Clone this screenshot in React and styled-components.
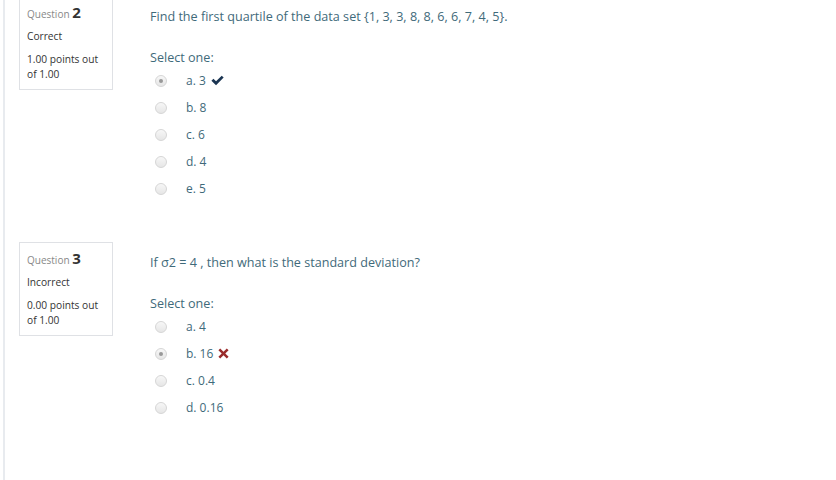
import styled, { createGlobalStyle } from 'styled-components';

const Global = createGlobalStyle`
  html, body {
    margin: 0;
    padding: 0;
    background: #fff;
    font-family: "Open Sans", "Liberation Sans", sans-serif;
  }
`;

const Page = styled.div`
  min-height: 480px;
  margin-left: 3px;
  border-left: 2px solid #e8ebef;
  padding-left: 14px;
  overflow: hidden;
`;

const Question = styled.div`
  display: flex;
  align-items: flex-start;
  margin-top: ${p => p.$first ? '-4px' : '0'};
  margin-bottom: 40px;
`;

const Info = styled.div`
  box-sizing: border-box;
  width: 94px;
  height: 94px;
  flex-shrink: 0;
  border: 1px solid #dfe1e5;
  padding: 6px 6px 0 7px;
  color: #333;
`;

const QNo = styled.div`
  font-size: 10px;
  color: #888;
  line-height: 18px;

  b {
    font-size: 15px;
    font-weight: 700;
    color: #333;
  }
`;

const State = styled.div`
  font-size: 10.2px;
  line-height: 15px;
  margin-top: 6px;
`;

const Grade = styled.div`
  font-size: 10.2px;
  line-height: 15px;
  margin-top: 8px;
  width: 76px;
`;

const Content = styled.div`
  margin-left: 37px;
  padding-top: 12px;
  color: #3f6a7a;
`;

const QText = styled.div`
  font-size: 12.6px;
  line-height: 18px;
`;

const Prompt = styled.div`
  font-size: 12.6px;
  line-height: 18px;
  margin-top: 23px;
`;

const Options = styled.div`
  display: flex;
  flex-direction: column;
`;

const Option = styled.label`
  display: flex;
  align-items: center;
  height: 27px;
  font-size: 12px;
`;

const Radio = styled.span`
  box-sizing: border-box;
  width: 12px;
  height: 12px;
  border-radius: 50%;
  margin-left: 5px;
  margin-right: 19px;
  border: 1px solid #d6d6d6;
  background: linear-gradient(#f7f7f7, #e6e6e6);
  display: flex;
  align-items: center;
  justify-content: center;

  &::after {
    content: '';
    display: ${p => p.$checked ? 'block' : 'none'};
    width: 4px;
    height: 4px;
    border-radius: 50%;
    background: #999;
  }
`;

const Mark = styled.svg`
  margin-left: 5px;
  width: ${p => p.$w}px;
  height: ${p => p.$w}px;
`;

const Check = () => (
  <Mark $w={13} viewBox="0 0 16 16">
    <path d="M0.5 8.3 L3 5.9 L6.2 9 L13.2 2 L15.6 4.4 L6.2 13.8 Z" fill="#1b3552" />
  </Mark>
);

const Cross = () => (
  <Mark $w={11} viewBox="0 0 16 16">
    <path d="M3.2 0.6 L8 5.4 L12.8 0.6 L15.4 3.2 L10.6 8 L15.4 12.8 L12.8 15.4 L8 10.6 L3.2 15.4 L0.6 12.8 L5.4 8 L0.6 3.2 Z" fill="#9a2c2c" />
  </Mark>
);

const questions = [
  {
    no: 2,
    state: 'Correct',
    grade: '1.00 points out of 1.00',
    text: 'Find the first quartile of the data set {1, 3, 3, 8, 8, 6, 6, 7, 4, 5}.',
    options: ['a. 3', 'b. 8', 'c. 6', 'd. 4', 'e. 5'],
    chosen: 0,
    right: true,
  },
  {
    no: 3,
    state: 'Incorrect',
    grade: '0.00 points out of 1.00',
    text: 'If σ2 = 4 , then what is the standard deviation?',
    options: ['a. 4', 'b. 16', 'c. 0.4', 'd. 0.16'],
    chosen: 1,
    right: false,
  },
];

export default function App() {
  return (
    <>
      <Global />
      <Page>
        {questions.map((q, i) => (
          <Question key={q.no} $first={i === 0}>
            <Info>
              <QNo>Question <b>{q.no}</b></QNo>
              <State>{q.state}</State>
              <Grade>{q.grade}</Grade>
            </Info>
            <Content>
              <QText>{q.text}</QText>
              <Prompt>Select one:</Prompt>
              <Options>
                {q.options.map((o, j) => (
                  <Option key={o}>
                    <Radio $checked={j === q.chosen} />
                    {o}
                    {j === q.chosen && (q.right ? <Check /> : <Cross />)}
                  </Option>
                ))}
              </Options>
            </Content>
          </Question>
        ))}
      </Page>
    </>
  );
}
